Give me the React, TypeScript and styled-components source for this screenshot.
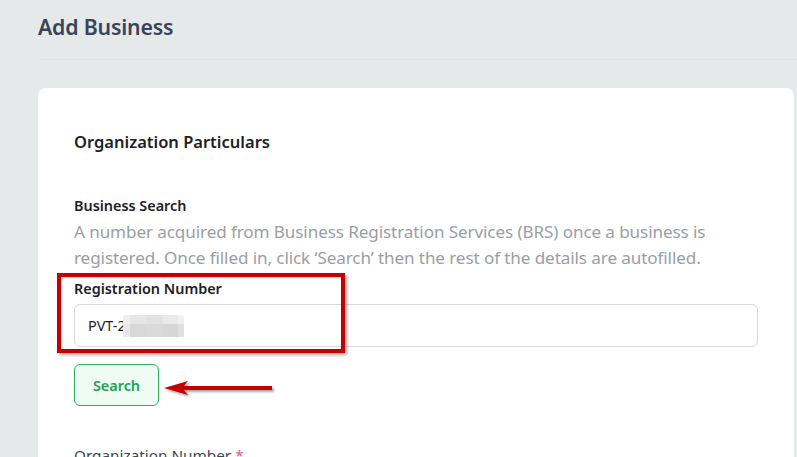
import React from 'react';
import styled, { createGlobalStyle } from 'styled-components';

const GlobalStyle = createGlobalStyle`
  html, body {
    margin: 0;
    padding: 0;
    background: #e6e9e9;
    font-family: 'Noto Sans', 'Open Sans', sans-serif;
    overflow: hidden;
  }
`;

const Page = styled.div`
  width: 797px;
  height: 457px;
  overflow: hidden;
`;

const Header = styled.header`
  margin-left: 38px;
  height: 59px;
  display: flex;
  align-items: center;
  border-bottom: 1px solid #dfe3e7;
`;

const PageTitle = styled.h1`
  margin: 0 0 6px;
  font-size: 21.3px;
  font-weight: 600;
  color: #3a4357;
  letter-spacing: -0.2px;
`;

const Card = styled.section`
  position: relative;
  margin: 28px 3px 0 38px;
  background: #fff;
  border-radius: 8px;
  padding: 42px 36px 0;
  height: 400px;
`;

const SectionTitle = styled.h2`
  margin: 0;
  font-size: 16.5px;
  line-height: 24px;
  font-weight: 600;
  color: #1d2125;
`;

const Field = styled.div<{ $gap?: number }>`
  margin-top: ${(p) => p.$gap ?? 0}px;
`;

const Label = styled.label`
  display: block;
  font-size: 14.4px;
  line-height: 20px;
  font-weight: 600;
  color: #1d2125;
`;

const Hint = styled.p`
  margin: 3px 0 0;
  font-size: 17.1px;
  line-height: 26px;
  color: #9a9ea4;
  letter-spacing: -0.1px;
`;

const InputBox = styled.div`
  margin-top: 5px;
  height: 41px;
  border: 1px solid #d6d9de;
  border-radius: 6px;
  display: flex;
  align-items: center;
  padding-left: 13px;
  font-size: 14.4px;
  color: #1d2125;
`;

const Masked = styled.svg`
  display: block;
  margin-left: -3px;
`;

const SearchButton = styled.button`
  margin-top: 17px;
  width: 85px;
  height: 42px;
  border: 1px solid #2fae60;
  border-radius: 6px;
  background: #effcf3;
  color: #23a053;
  font-family: inherit;
  font-size: 14.4px;
  font-weight: 600;
  cursor: pointer;
`;

const Required = styled.span`
  color: #f0507a;
`;

const LowerLabel = styled(Label)`
  font-weight: 400;
  font-size: 15.3px;
  color: #3f4650;
`;

const Highlight = styled.div`
  position: absolute;
  left: 19px;
  top: 185px;
  width: 280px;
  height: 72px;
  border: 4px solid #c40000;
  box-shadow: 2px 2px 3px rgba(0, 0, 0, 0.35), inset 1px 1px 2px rgba(0, 0, 0, 0.2);
  pointer-events: none;
`;

const Arrow = styled.svg`
  position: absolute;
  left: 125px;
  top: 291px;
  overflow: visible;
  pointer-events: none;
`;

const blocks = [
  { x: 0, y: 0, w: 7, h: 9, c: '#efefef' },
  { x: 7, y: 0, w: 16, h: 9, c: '#e6e6e6' },
  { x: 23, y: 0, w: 17, h: 9, c: '#e2e2e2' },
  { x: 40, y: 0, w: 15, h: 9, c: '#eaeaea' },
  { x: 55, y: 0, w: 6, h: 9, c: '#f1f1f1' },
  { x: 0, y: 9, w: 7, h: 13, c: '#e9e9e9' },
  { x: 7, y: 9, w: 16, h: 13, c: '#d8d8d8' },
  { x: 23, y: 9, w: 17, h: 13, c: '#dadada' },
  { x: 40, y: 9, w: 15, h: 13, c: '#d6d6d6' },
  { x: 55, y: 9, w: 6, h: 13, c: '#e0e0e0' },
];

export default function App() {
  return (
    <Page>
      <GlobalStyle />
      <Header>
        <PageTitle>Add Business</PageTitle>
      </Header>
      <Card>
        <SectionTitle>Organization Particulars</SectionTitle>

        <Field $gap={42}>
          <Label>Business Search</Label>
          <Hint>
            A number acquired from Business Registration Services (BRS) once a business is
            registered. Once filled in, click ‘Search’ then the rest of the details are autofilled.
          </Hint>
        </Field>

        <Field $gap={8}>
          <Label>Registration Number</Label>
          <InputBox>
            PVT-2
            <Masked width="61" height="22" viewBox="0 0 61 22">
              {blocks.map((b, i) => (
                <rect key={i} x={b.x} y={b.y} width={b.w} height={b.h} fill={b.c} />
              ))}
            </Masked>
          </InputBox>
        </Field>

        <SearchButton type="button">Search</SearchButton>

        <Field $gap={39}>
          <LowerLabel>
            Organization Number <Required>*</Required>
          </LowerLabel>
        </Field>

        <Highlight />
        <Arrow width="112" height="22" viewBox="0 0 112 22">
          <defs>
            <filter id="arrowShadow" x="-10%" y="-40%" width="130%" height="200%">
              <feDropShadow dx="2" dy="2" stdDeviation="1.2" floodColor="#000" floodOpacity="0.35" />
            </filter>
          </defs>
          <path
            d="M1 9 L25 2 L21 7 L109 7 L109 11 L21 11 L25 16 Z"
            fill="#c40000"
            filter="url(#arrowShadow)"
          />
        </Arrow>
      </Card>
    </Page>
  );
}
